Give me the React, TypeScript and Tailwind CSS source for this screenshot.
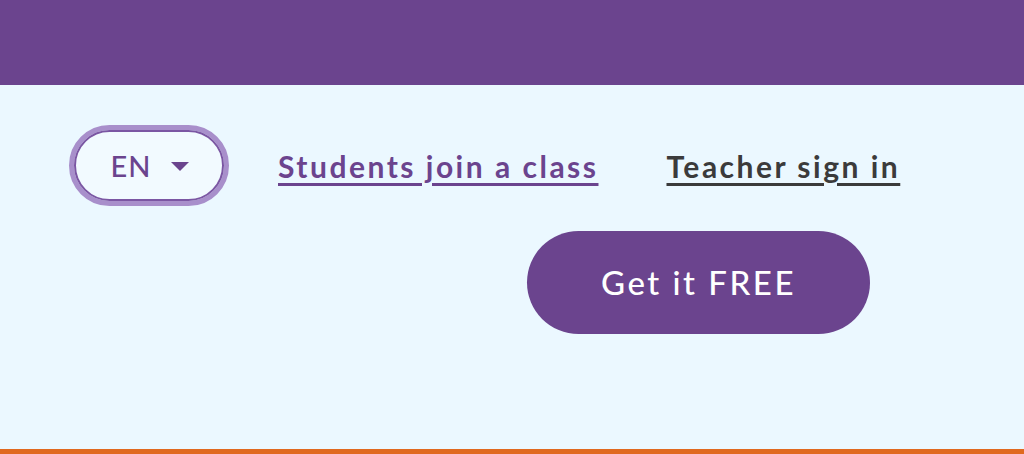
export default function App() {
  return (
    <div className="h-[454px] w-[1024px] overflow-hidden bg-[#ebf8ff] font-['Lato','Liberation_Sans',sans-serif] flex flex-col">
      {/* top banner */}
      <div className="h-[85px] bg-[#6b448e] shrink-0" />

      <div className="flex-1 flex flex-col">
        {/* language + account links */}
        <div className="flex items-center pl-[69px] pt-[40px]">
          <button className="w-[160px] h-[81px] rounded-full border-[5px] border-[#a88fcb] flex items-center justify-center">
            <span className="w-full h-full rounded-full border-2 border-[#7b56a3] flex items-center justify-center gap-[20px] bg-[#f2faff] pl-[2px]">
              <span className="text-[29px] font-medium text-[#6b448e] leading-none tracking-[1px]">EN</span>
              <svg width="18" height="9" viewBox="0 0 18 9" className="mt-[1px]">
                <path d="M0 0h18L9 9z" fill="#6b448e" />
              </svg>
            </span>
          </button>
          <a href="#" className="ml-[49px] text-[30px] font-bold text-[#6b448e] tracking-[2.5px] underline decoration-[3px] underline-offset-[5px] leading-none">
            Students join a class
          </a>
          <a href="#" className="ml-[68px] text-[30px] font-bold text-[#3b3b3b] tracking-[2.5px] underline decoration-[3px] underline-offset-[5px] leading-none">
            Teacher sign in
          </a>
        </div>

        {/* call to action */}
        <div className="flex pl-[527px] pt-[25px]">
          <a href="#" className="w-[343px] h-[103px] rounded-full bg-[#6b448e] text-white text-[33px] font-medium tracking-[2.5px] flex items-center justify-center">
            Get it FREE
          </a>
        </div>
      </div>

      <div className="h-[5px] bg-[#e0691f] shrink-0" />
    </div>
  );
}
